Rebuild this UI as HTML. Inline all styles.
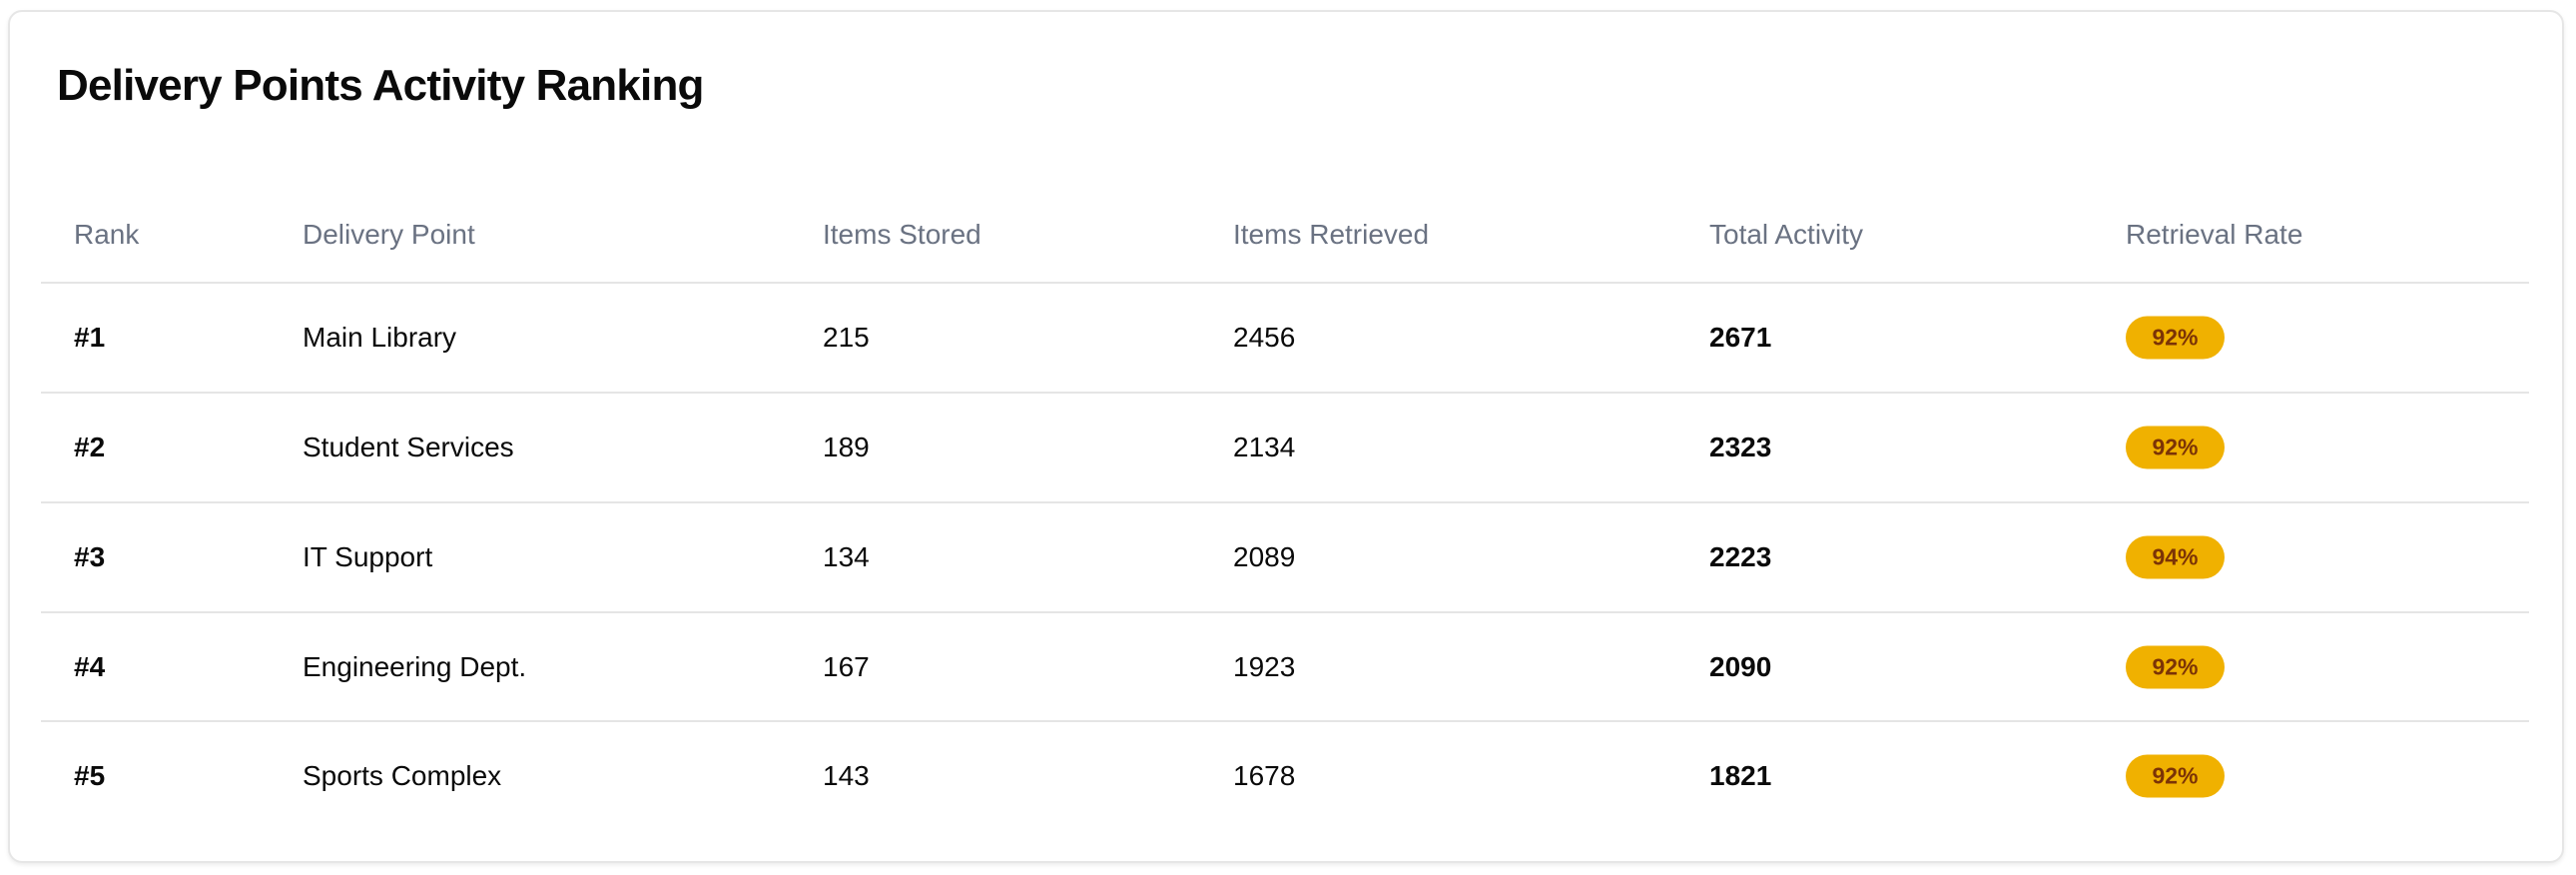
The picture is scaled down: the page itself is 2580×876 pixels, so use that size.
<!DOCTYPE html>
<html><head><meta charset="utf-8"><style>
*{margin:0;padding:0;box-sizing:border-box}
body{width:2580px;height:876px;background:#fff;font-family:"Liberation Sans",Arial,sans-serif;color:#0a0a0a;position:relative;overflow:hidden}
.card{position:absolute;left:8px;top:10px;width:2560px;height:854px;border:2px solid #e6e6e6;border-radius:14px;box-shadow:0 2px 4px rgba(0,0,0,.08)}
h1{position:absolute;left:57px;top:58px;font-size:44px;line-height:56px;font-weight:700;letter-spacing:-0.8px;color:#0a0a0a}
.c{position:absolute;font-size:28px;line-height:34px;transform:translateY(-50%)}
.h{color:#6a7282}
.b{font-weight:700}
.line{position:absolute;left:41px;width:2492px;height:2px;background:#e5e5e5}
.badge{position:absolute;left:2129px;width:99px;height:43px;border-radius:22px;background:#f0b100;color:#7b3306;font-weight:700;font-size:23px;line-height:43px;text-align:center;transform:translateY(-50%)}
</style></head><body>
<div class="card"></div>
<h1>Delivery Points Activity Ranking</h1>

<div class="c h" style="left:74px;top:235px">Rank</div>
<div class="c h" style="left:303px;top:235px">Delivery Point</div>
<div class="c h" style="left:824px;top:235px">Items Stored</div>
<div class="c h" style="left:1235px;top:235px">Items Retrieved</div>
<div class="c h" style="left:1712px;top:235px">Total Activity</div>
<div class="c h" style="left:2129px;top:235px">Retrieval Rate</div>
<div class="line" style="top:282px"></div>

<div class="c b" style="left:74px;top:338px">#1</div>
<div class="c" style="left:303px;top:338px">Main Library</div>
<div class="c" style="left:824px;top:338px">215</div>
<div class="c" style="left:1235px;top:338px">2456</div>
<div class="c b" style="left:1712px;top:338px">2671</div>
<div class="badge" style="top:338px">92%</div>
<div class="line" style="top:392px"></div>

<div class="c b" style="left:74px;top:448px">#2</div>
<div class="c" style="left:303px;top:448px">Student Services</div>
<div class="c" style="left:824px;top:448px">189</div>
<div class="c" style="left:1235px;top:448px">2134</div>
<div class="c b" style="left:1712px;top:448px">2323</div>
<div class="badge" style="top:448px">92%</div>
<div class="line" style="top:502px"></div>

<div class="c b" style="left:74px;top:558px">#3</div>
<div class="c" style="left:303px;top:558px">IT Support</div>
<div class="c" style="left:824px;top:558px">134</div>
<div class="c" style="left:1235px;top:558px">2089</div>
<div class="c b" style="left:1712px;top:558px">2223</div>
<div class="badge" style="top:558px">94%</div>
<div class="line" style="top:612px"></div>

<div class="c b" style="left:74px;top:668px">#4</div>
<div class="c" style="left:303px;top:668px">Engineering Dept.</div>
<div class="c" style="left:824px;top:668px">167</div>
<div class="c" style="left:1235px;top:668px">1923</div>
<div class="c b" style="left:1712px;top:668px">2090</div>
<div class="badge" style="top:668px">92%</div>
<div class="line" style="top:721px"></div>

<div class="c b" style="left:74px;top:777px">#5</div>
<div class="c" style="left:303px;top:777px">Sports Complex</div>
<div class="c" style="left:824px;top:777px">143</div>
<div class="c" style="left:1235px;top:777px">1678</div>
<div class="c b" style="left:1712px;top:777px">1821</div>
<div class="badge" style="top:777px">92%</div>
</body></html>
